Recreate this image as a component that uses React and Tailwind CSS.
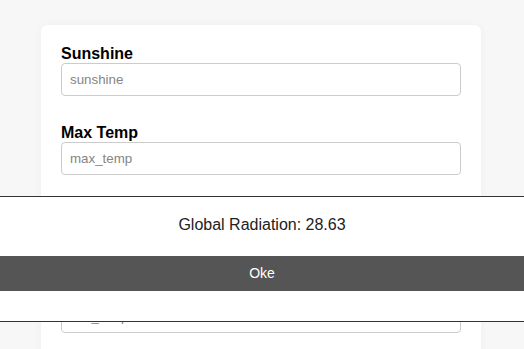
import React from "react";

const fields = [
  { label: "Sunshine", ph: "sunshine" },
  { label: "Max Temp", ph: "max_temp" },
  { label: "Mean Temp", ph: "mean_temp" },
  { label: "Min Temp", ph: "min_temp" },
];

export default function App() {
  return (
    <div
      className="relative h-[349px] overflow-hidden bg-[#f7f7f7]"
      style={{ fontFamily: '"Liberation Sans", Arial, sans-serif' }}
    >
      <div className="ml-[41px] mt-[25px] h-[360px] w-[440px] rounded-[7px] bg-white px-[20px] pt-[19px] shadow-[0_0_10px_rgba(0,0,0,0.04)]">
        {fields.map((f) => (
          <div key={f.label} className="mb-[27px]">
            <label className="block text-[16px] font-bold leading-[19px] text-black">
              {f.label}
            </label>
            <input
              placeholder={f.ph}
              className="block h-[33px] w-[400px] rounded-[4px] border border-[#cccccc] px-[8px] text-[13.33px] text-black outline-none placeholder:text-[#858585]"
              style={{ fontFamily: '"Liberation Sans", Arial, sans-serif' }}
            />
          </div>
        ))}
      </div>

      <div className="absolute left-0 right-0 top-[196px] border-y border-[#333333] bg-white">
        <p className="pt-[19px] text-center text-[16px] leading-[18px] text-[#222222]">
          Global Radiation: 28.63
        </p>
        <button className="mt-[22px] flex h-[35px] w-full items-center justify-center bg-[#555555] text-[14px] text-white">
          Oke
        </button>
        <div className="h-[30px]" />
      </div>
    </div>
  );
}
